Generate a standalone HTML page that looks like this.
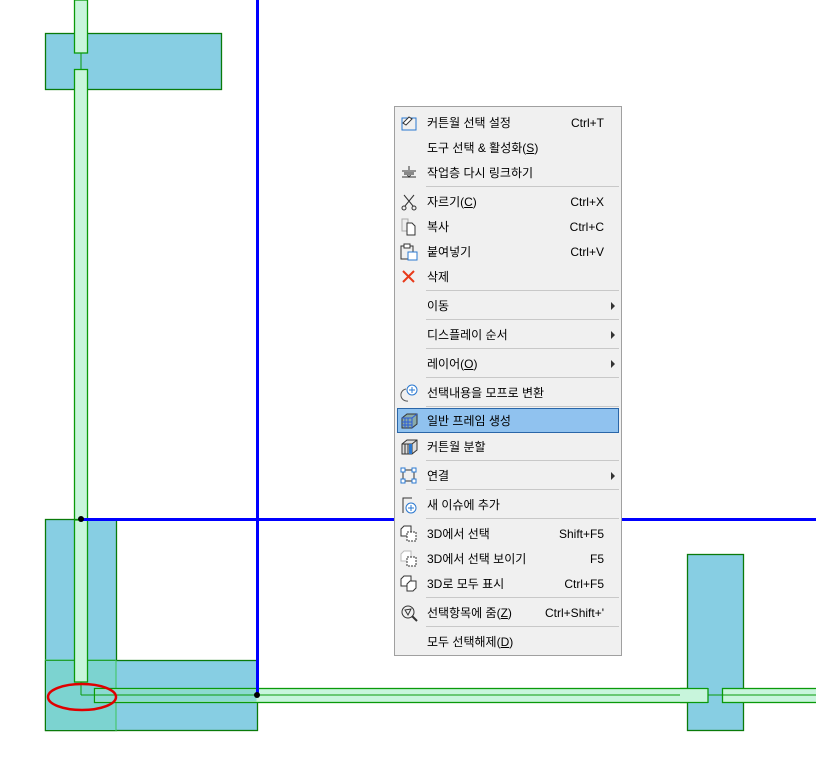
<!DOCTYPE html>
<html><head><meta charset="utf-8"><style>
body{margin:0;width:816px;height:777px;background:#fff;position:relative;overflow:hidden;font-family:"Liberation Sans","Noto Sans CJK KR",sans-serif;}
svg.bg{position:absolute;left:0;top:0}
#menu{position:absolute;left:394px;top:106px;width:226px;height:548px;background:#f0f0f0;border:1px solid #a0a0a0;}
.it{position:absolute;left:0;width:226px;height:24px;font-size:12px;color:#000;line-height:24px}
.it .t{position:absolute;left:32px}
.it .k{position:absolute;right:17px}
.it .a{position:absolute;right:6px;top:8px;width:0;height:0;border-left:4px solid #333;border-top:4px solid transparent;border-bottom:4px solid transparent}
.sep{position:absolute;left:31px;width:193px;height:1px;background:#c8c8c8}
.hl{position:absolute;left:2px;top:301px;width:220px;height:23px;background:#90c2ef;border:1px solid #2a66a8}
.ic{position:absolute;left:5px;top:3px}
u{text-decoration:underline}
</style></head><body>
<svg class="bg" width="816" height="777">
<!-- top block -->
<rect x="45.5" y="33.5" width="176" height="56" fill="#87cee3" stroke="#0a7a0a" stroke-width="1.3"/>
<rect x="74.5" y="0" width="13" height="53" fill="#c8f5dc" stroke="#0a9a0a" stroke-width="1.3"/>
<rect x="74.5" y="69.5" width="13" height="620" fill="#c8f5dc" stroke="#0a9a0a" stroke-width="1.3"/>
<line x1="81" y1="53" x2="81" y2="69" stroke="#0a9a0a"/>
<!-- bottom left blocks -->
<rect x="45.5" y="519.5" width="71" height="211" fill="#87cee3" stroke="#0a7a0a" stroke-width="1.3"/>
<rect x="45.5" y="660.5" width="212" height="70" fill="#87cee3" stroke="#0a7a0a" stroke-width="1.3"/>
<rect x="46" y="661" width="70" height="69" fill="#7cd3d0"/>
<line x1="116" y1="660" x2="116" y2="731" stroke="#3bc45a"/>
<line x1="45" y1="660" x2="116" y2="660" stroke="#3bc45a"/>
<rect x="74.5" y="520" width="13" height="162" fill="#c8f5dc" stroke="#0a9a0a" stroke-width="1.3"/>
<line x1="81" y1="682" x2="81" y2="695" stroke="#0a9a0a"/>
<line x1="81" y1="695" x2="95" y2="695" stroke="#0a9a0a"/>
<!-- horizontal wall -->
<rect x="94.5" y="688.5" width="613" height="14" fill="#c8f5dc" stroke="#0a9a0a" stroke-width="1.3"/>
<rect x="95.5" y="689.5" width="161" height="12" fill="#7cd3d0" opacity="0.8"/>
<line x1="95" y1="695" x2="708" y2="695" stroke="#0a9a0a"/>
<!-- right block -->
<rect x="687.5" y="554.5" width="56" height="176" fill="#87cee3" stroke="#0a7a0a" stroke-width="1.3"/>
<rect x="94.5" y="688.5" width="0" height="0"/>
<rect x="680" y="689" width="28" height="13" fill="#c8f5dc"/>
<rect x="722.5" y="688.5" width="100" height="14" fill="#c8f5dc" stroke="#0a9a0a" stroke-width="1.3"/>
<line x1="680" y1="688.5" x2="708" y2="688.5" stroke="#0a9a0a" stroke-width="1.3"/>
<line x1="708" y1="688" x2="708" y2="703" stroke="#0a9a0a" stroke-width="1.3"/>
<line x1="680" y1="702.5" x2="708" y2="702.5" stroke="#0a9a0a" stroke-width="1.3"/>
<line x1="708" y1="695" x2="722" y2="695" stroke="#0a9a0a"/>
<line x1="722" y1="695" x2="816" y2="695" stroke="#0a9a0a"/>
<!-- blue lines -->
<rect x="256" y="0" width="3" height="696" fill="#0000ff"/>
<rect x="81" y="518" width="735" height="3" fill="#0000ff"/>
<circle cx="81" cy="519" r="3" fill="#000"/>
<circle cx="257" cy="695" r="3" fill="#000"/>
<ellipse cx="82" cy="697" rx="34" ry="13" fill="none" stroke="#e00000" stroke-width="2.5"/>
</svg>
<div id="menu">
<div class="hl"></div>
<div class="it" style="top:4px"><svg class="ic" width="18" height="18"><rect x="2" y="4" width="14" height="12" fill="none" stroke="#2a78d0"/><path d="M3 9l6-6 3 2-6 6z" fill="#fff" stroke="#333"/></svg><span class="t">커튼월 선택 설정</span><span class="k">Ctrl+T</span></div>
<div class="it" style="top:29px"><span class="t">도구 선택 &amp; 활성화(<u>S</u>)</span></div>
<div class="it" style="top:54px"><svg class="ic" width="18" height="18"><path d="M2 7h14M2 13h14M9 2v4M6 9l3 4 3-4" stroke="#333" fill="none"/><rect x="4" y="8" width="10" height="3" fill="#888"/></svg><span class="t">작업층 다시 링크하기</span></div>
<div class="sep" style="top:79px"></div>
<div class="it" style="top:83px"><svg class="ic" width="18" height="18"><path d="M4 2l9 11M14 2L5 13" stroke="#333" fill="none"/><circle cx="4" cy="15" r="2" fill="none" stroke="#333"/><circle cx="14" cy="15" r="2" fill="none" stroke="#333"/></svg><span class="t">자르기(<u>C</u>)</span><span class="k">Ctrl+X</span></div>
<div class="it" style="top:108px"><svg class="ic" width="18" height="18"><path d="M2 1h6v12H2z" fill="#eee" stroke="#aaa"/><path d="M7 5h5l3 3v9H7z" fill="#fff" stroke="#333"/></svg><span class="t">복사</span><span class="k">Ctrl+C</span></div>
<div class="it" style="top:133px"><svg class="ic" width="18" height="18"><rect x="1" y="3" width="12" height="13" fill="none" stroke="#333"/><rect x="4" y="1" width="6" height="4" fill="#fff" stroke="#333"/><rect x="8" y="9" width="9" height="8" fill="#fff" stroke="#2a78d0"/></svg><span class="t">붙여넣기</span><span class="k">Ctrl+V</span></div>
<div class="it" style="top:158px"><svg class="ic" width="18" height="18"><path d="M3 3l11 11M14 3L3 14" stroke="#e83a1a" stroke-width="2"/></svg><span class="t">삭제</span></div>
<div class="sep" style="top:183px"></div>
<div class="it" style="top:187px"><span class="t">이동</span><span class="a"></span></div>
<div class="sep" style="top:212px"></div>
<div class="it" style="top:216px"><span class="t">디스플레이 순서</span><span class="a"></span></div>
<div class="sep" style="top:241px"></div>
<div class="it" style="top:245px"><span class="t">레이어(<u>O</u>)</span><span class="a"></span></div>
<div class="sep" style="top:270px"></div>
<div class="it" style="top:274px"><svg class="ic" width="18" height="18"><path d="M6 5a6 6 0 1 0 2 12" fill="none" stroke="#555"/><circle cx="12" cy="6" r="5" fill="#fff" stroke="#2a78d0"/><path d="M12 3v6M9 6h6" stroke="#2a78d0"/></svg><span class="t">선택내용을 모프로 변환</span></div>
<div class="sep" style="top:299px"></div>
<div class="it" style="top:302px"><svg class="ic" width="18" height="18"><path d="M2 6l5-4h10v10l-5 4H2z" fill="#8aa" stroke="#333"/><path d="M2 6h10v10M12 6l5-4M5 6v10M8 6v10M2 10h10M2 13h10" stroke="#2a5bd8" fill="none"/></svg><span class="t">일반 프레임 생성</span></div>
<div class="it" style="top:328px"><svg class="ic" width="18" height="18"><path d="M2 6l5-4h10v10l-5 4H2z" fill="#ddd" stroke="#333"/><path d="M2 6h10v10M12 6l5-4M5 6v10M8 6v10" stroke="#333" fill="none"/><rect x="9" y="6" width="3" height="10" fill="#2a78d0"/></svg><span class="t">커튼월 분할</span></div>
<div class="sep" style="top:353px"></div>
<div class="it" style="top:357px"><svg class="ic" width="18" height="18"><rect x="3" y="3" width="11" height="11" fill="none" stroke="#333"/><rect x="1" y="1" width="4" height="4" fill="#fff" stroke="#2a78d0"/><rect x="12" y="1" width="4" height="4" fill="#fff" stroke="#2a78d0"/><rect x="1" y="12" width="4" height="4" fill="#fff" stroke="#2a78d0"/><rect x="12" y="12" width="4" height="4" fill="#fff" stroke="#2a78d0"/></svg><span class="t">연결</span><span class="a"></span></div>
<div class="sep" style="top:382px"></div>
<div class="it" style="top:386px"><svg class="ic" width="18" height="18"><path d="M3 17V2h9" fill="none" stroke="#333"/><circle cx="11" cy="12" r="5" fill="#fff" stroke="#2a78d0"/><path d="M11 9v6M8 12h6" stroke="#2a78d0"/></svg><span class="t">새 이슈에 추가</span></div>
<div class="sep" style="top:411px"></div>
<div class="it" style="top:415px"><svg class="ic" width="18" height="18"><path d="M1 4l3-3h7v7l-3 3H1z" fill="#fff" stroke="#333"/><rect x="7" y="7" width="9" height="9" fill="#fff" stroke="#333" stroke-dasharray="2 1"/></svg><span class="t">3D에서 선택</span><span class="k">Shift+F5</span></div>
<div class="it" style="top:440px"><svg class="ic" width="18" height="18"><path d="M1 4l3-3h7v7l-3 3H1z" fill="#fff" stroke="#bbb"/><rect x="7" y="7" width="9" height="9" fill="#fff" stroke="#333" stroke-dasharray="2 1"/></svg><span class="t">3D에서 선택 보이기</span><span class="k">F5</span></div>
<div class="it" style="top:465px"><svg class="ic" width="18" height="18"><path d="M1 4l3-3h7v7l-3 3H1z" fill="#fff" stroke="#333"/><path d="M7 9l3-3h6v7l-3 3H7z" fill="#fff" stroke="#333"/></svg><span class="t">3D로 모두 표시</span><span class="k">Ctrl+F5</span></div>
<div class="sep" style="top:490px"></div>
<div class="it" style="top:494px"><svg class="ic" width="18" height="18"><circle cx="8" cy="8" r="6" fill="none" stroke="#333"/><path d="M12 12l5 5" stroke="#333" stroke-width="2"/><path d="M5 6l6-1-3 6z" fill="none" stroke="#333"/></svg><span class="t">선택항목에 줌(<u>Z</u>)</span><span class="k">Ctrl+Shift+'</span></div>
<div class="sep" style="top:519px"></div>
<div class="it" style="top:523px"><span class="t">모두 선택해제(<u>D</u>)</span></div>
</div>
</body></html>
